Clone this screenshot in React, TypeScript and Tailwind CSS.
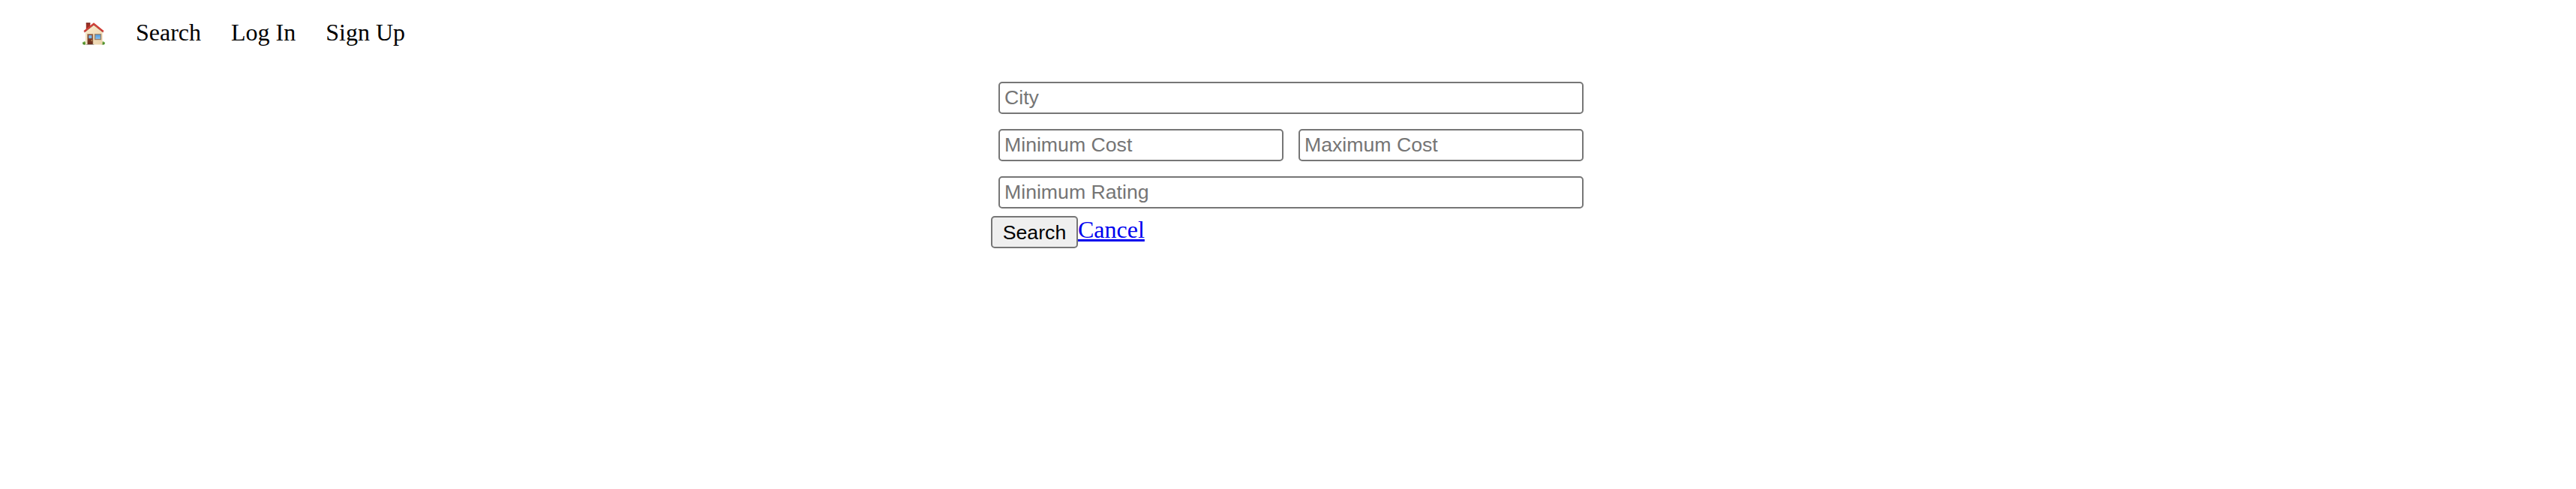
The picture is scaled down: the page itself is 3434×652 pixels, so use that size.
import React from "react";

function House() {
  return (
    <svg viewBox="0 0 30 30" className="h-[30px] w-[30px]" aria-label="Home">
      <defs>
        <linearGradient id="wall" x1="0" y1="0" x2="1" y2="1">
          <stop offset="0" stopColor="#fbedd0" />
          <stop offset="1" stopColor="#ead3ac" />
        </linearGradient>
        <linearGradient id="glass" x1="0" y1="0" x2="0" y2="1">
          <stop offset="0" stopColor="#4c9be0" />
          <stop offset="1" stopColor="#86c0f0" />
        </linearGradient>
        <linearGradient id="door" x1="0" y1="0" x2="0" y2="1">
          <stop offset="0" stopColor="#8d4a31" />
          <stop offset="1" stopColor="#6b2e1c" />
        </linearGradient>
      </defs>
      <ellipse cx="2.6" cy="27.6" rx="2.6" ry="2.2" fill="#4f8f2c" />
      <ellipse cx="27.3" cy="27.6" rx="2.6" ry="2.2" fill="#4f8f2c" />
      <path d="M1 26.8 2.5 25.9 4 26.4M26 26.6 27.4 25.9 29 26.8" stroke="#7cb84d" fill="none" />
      <path d="M4.8 0.5H10.3V8L4.8 12Z" fill="#9b3024" />
      <path d="M4.8 0.5H10.3V1.6H4.8Z" fill="#6e2119" />
      <path d="M3.8 11.5 15 2 26.6 11.5V29.4H3.8Z" fill="url(#wall)" />
      <path d="M2.6 13 15 3.2 27.4 13" stroke="#8f2a22" strokeWidth="0.9" fill="none" />
      <path d="M2 11.9 15 1.4 28 11.9" stroke="#d23a33" strokeWidth="1.9" fill="none" />
      <rect x="6.2" y="15.1" width="8" height="14.3" fill="#a98b6c" />
      <rect x="7" y="16" width="6.6" height="13.2" fill="url(#door)" />
      <rect x="8.2" y="17" width="4.2" height="4.2" fill="#79b8ea" />
      <circle cx="12.3" cy="24" r="0.7" fill="#e9bd69" />
      <rect x="5" y="29" width="10.3" height="1" fill="#aaa5a0" />
      <rect x="15.9" y="15.1" width="9.2" height="8.1" fill="#9b7f63" />
      <rect x="17.2" y="16.3" width="6.6" height="5.6" fill="url(#glass)" />
    </svg>
  );
}

const field =
  "m-[10px] h-[43px] min-w-0 flex-1 rounded-[5px] border-2 border-[#767676] bg-white px-1.5 py-0 font-['Liberation_Sans',Arial,sans-serif] text-[26.667px] leading-[30px] text-black placeholder:text-[#757575] placeholder:opacity-100";

export default function App() {
  return (
    <div className="min-h-[652px] bg-white font-['Liberation_Serif','Times_New_Roman',serif] text-[32px] leading-[36px] text-black">
      <nav className="flex h-[99px] items-start gap-10 pl-[110px] pt-[25px]">
        <a href="#" className="mt-[5px] block w-[31px]">
          <House />
        </a>
        <a href="#">Search</a>
        <a href="#">Log In</a>
        <a href="#">Sign Up</a>
      </nav>
      <form className="ml-[1321px] w-[800px]">
        <div className="flex">
          <input className={field} placeholder="City" />
        </div>
        <div className="flex">
          <input className={field} placeholder="Minimum Cost" />
          <input className={field} placeholder="Maximum Cost" />
        </div>
        <div className="flex">
          <input className={field} placeholder="Minimum Rating" />
        </div>
        <div className="flex items-start">
          <button
            type="button"
            className="h-[43px] w-[116px] rounded-[5px] border-2 border-[#767676] bg-[#efefef] text-center font-['Liberation_Sans',Arial,sans-serif] text-[26.667px] leading-[30px]"
          >
            Search
          </button>
          <a
            href="#"
            className="text-[#0000ee] underline decoration-[3px] underline-offset-2 [text-decoration-skip-ink:none]"
          >
            Cancel
          </a>
        </div>
      </form>
    </div>
  );
}
